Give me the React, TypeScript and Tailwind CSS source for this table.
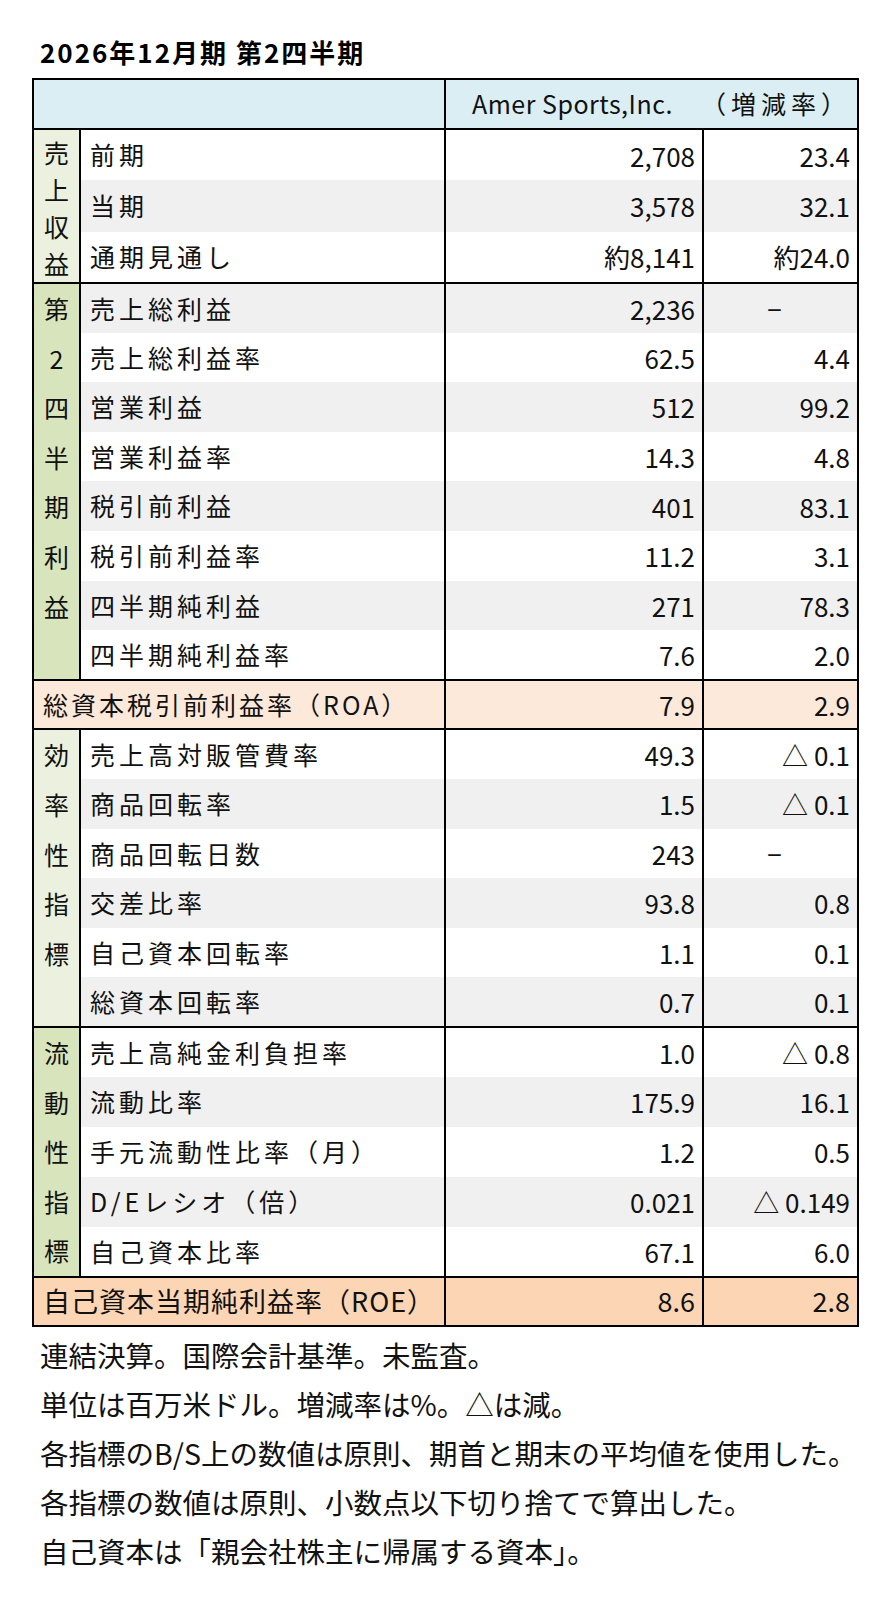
import React from "react";

type Row = [string, string, string];

const sales: Row[] = [
  ["前期", "2,708", "23.4"],
  ["当期", "3,578", "32.1"],
  ["通期見通し", "約8,141", "約24.0"],
];
const q2: Row[] = [
  ["売上総利益", "2,236", "−"],
  ["売上総利益率", "62.5", "4.4"],
  ["営業利益", "512", "99.2"],
  ["営業利益率", "14.3", "4.8"],
  ["税引前利益", "401", "83.1"],
  ["税引前利益率", "11.2", "3.1"],
  ["四半期純利益", "271", "78.3"],
  ["四半期純利益率", "7.6", "2.0"],
];
const eff: Row[] = [
  ["売上高対販管費率", "49.3", "△ 0.1"],
  ["商品回転率", "1.5", "△ 0.1"],
  ["商品回転日数", "243", "−"],
  ["交差比率", "93.8", "0.8"],
  ["自己資本回転率", "1.1", "0.1"],
  ["総資本回転率", "0.7", "0.1"],
];
const liq: Row[] = [
  ["売上高純金利負担率", "1.0", "△ 0.8"],
  ["流動比率", "175.9", "16.1"],
  ["手元流動性比率（月）", "1.2", "0.5"],
  ["D/Eレシオ（倍）", "0.021", "△ 0.149"],
  ["自己資本比率", "67.1", "6.0"],
];

const font = { fontFamily: '"Noto Sans CJK JP", "Noto Sans", sans-serif' };

function Group({
  rows,
  side,
  sideBg,
  offset,
  stacked,
}: {
  rows: Row[];
  side: string[];
  sideBg: string;
  offset: number;
  stacked?: boolean;
}) {
  return (
    <>
      {rows.map((r, i) => {
        const gray = (i + offset) % 2 === 1;
        const bg = gray ? "bg-[#f0f0f0]" : "bg-white";
        const top = i === 0 ? "border-t-2 border-t-black" : "";
        return (
          <tr key={r[0]} className="h-[49.6px]">
            {i === 0 && (
              <td
                rowSpan={rows.length}
                className={`${sideBg} border-2 border-black p-0 align-top text-center text-[25px] text-[#111]`}
              >
                {stacked ? (
                  <div className="flex flex-col items-center pt-[4px] leading-[37px]">
                    {side.map((c, k) => (
                      <span key={k}>{c}</span>
                    ))}
                  </div>
                ) : (
                  <div className="flex flex-col items-center">
                    {side.map((c, k) => (
                      <span key={k} className="h-[49.6px] leading-[49.6px]">
                        {c}
                      </span>
                    ))}
                  </div>
                )}
              </td>
            )}
            <td className={`${bg} ${top} border-x-2 border-x-black pl-[9px] text-[25px] tracking-[4px] text-[#111] whitespace-nowrap`}>
              {r[0]}
            </td>
            <td className={`${bg} ${top} border-x-2 border-x-black pr-[7px] text-right text-[26px] text-[#111]`}>
              {r[1]}
            </td>
            <td
              className={`${bg} ${top} border-x-2 border-x-black ${
                r[2] === "−" ? "text-center pr-[12px]" : "text-right pr-[7px]"
              } text-[26px] text-[#111] whitespace-nowrap`}
            >
              {r[2]}
            </td>
          </tr>
        );
      })}
    </>
  );
}

export default function App() {
  return (
    <div className="w-[889px] h-[1600px] bg-white" style={font}>
      <div className="pt-[37px] pl-[40px] text-[26px] leading-[30px] font-bold tracking-[2px] text-black">
        2026年12月期 第2四半期
      </div>
      <table className="mt-[11px] ml-[32px] w-[825px] border-collapse border-2 border-black table-fixed">
        <colgroup>
          <col className="w-[47px]" />
          <col className="w-[365px]" />
          <col className="w-[258px]" />
          <col className="w-[155px]" />
        </colgroup>
        <tbody>
          <tr className="h-[50px] bg-[#daeef3]">
            <td colSpan={2} className="border-2 border-black"></td>
            <td colSpan={2} className="border-2 border-black text-[25px] text-[#111] whitespace-nowrap">
              <div className="flex">
                <span className="pl-[26px] tracking-[0.5px]">Amer Sports,Inc.</span>
                <span className="ml-auto pr-[6px] tracking-[5px]">（増減率）</span>
              </div>
            </td>
          </tr>
          <Group rows={sales} side={["売", "上", "収", "益"]} sideBg="bg-[#ebf1de]" offset={0} stacked />
          <Group
            rows={q2}
            side={["第", "2", "四", "半", "期", "利", "益"]}
            sideBg="bg-[#d8e4bc]"
            offset={1}
          />
          <tr className="h-[49.6px] bg-[#fde9d9]">
            <td colSpan={2} className="border-2 border-black pl-[9px] text-[25px] tracking-[3px] text-[#111] whitespace-nowrap">
              総資本税引前利益率（ROA）
            </td>
            <td className="border-2 border-black pr-[7px] text-right text-[26px] text-[#111]">7.9</td>
            <td className="border-2 border-black pr-[7px] text-right text-[26px] text-[#111]">2.9</td>
          </tr>
          <Group rows={eff} side={["効", "率", "性", "指", "標"]} sideBg="bg-[#ebf1de]" offset={0} />
          <Group rows={liq} side={["流", "動", "性", "指", "標"]} sideBg="bg-[#d8e4bc]" offset={0} />
          <tr className="h-[49.6px] bg-[#fcd5b4]">
            <td colSpan={2} className="border-2 border-black pl-[9px] text-[27px] tracking-[1px] text-[#111] whitespace-nowrap">
              自己資本当期純利益率（ROE）
            </td>
            <td className="border-2 border-black pr-[7px] text-right text-[27px] text-[#111]">8.6</td>
            <td className="border-2 border-black pr-[7px] text-right text-[27px] text-[#111]">2.8</td>
          </tr>
        </tbody>
      </table>
      <div className="pt-[3px] pl-[40px] text-[28.5px] leading-[49px] text-[#111]">
        <p>連結決算。国際会計基準。未監査。</p>
        <p>単位は百万米ドル。増減率は%。△は減。</p>
        <p>各指標のB/S上の数値は原則、期首と期末の平均値を使用した。</p>
        <p>各指標の数値は原則、小数点以下切り捨てで算出した。</p>
        <p>自己資本は「親会社株主に帰属する資本」。</p>
      </div>
    </div>
  );
}
